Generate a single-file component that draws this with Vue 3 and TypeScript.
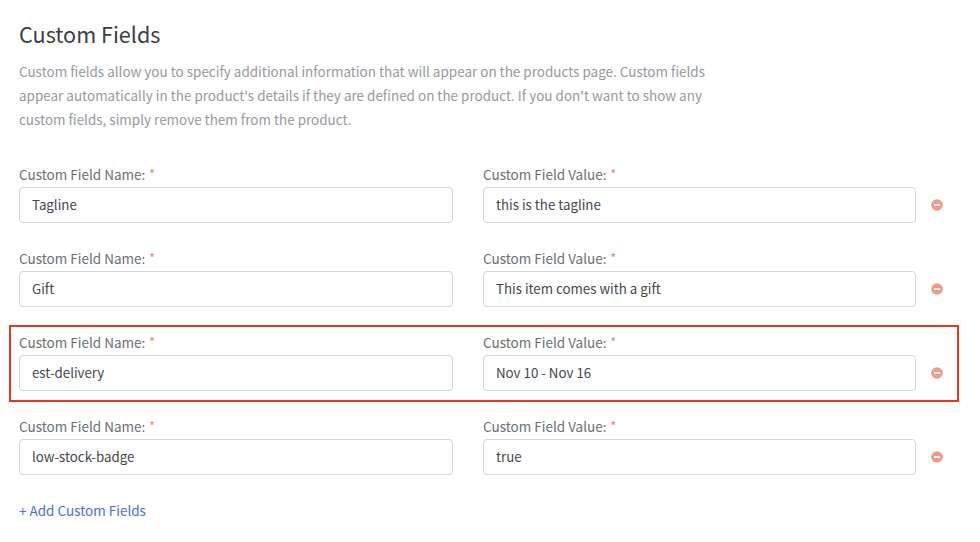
<script setup lang="ts">
interface Field { name: string; value: string; marked?: boolean }
const fields: Field[] = [
  { name: 'Tagline', value: 'this is the tagline' },
  { name: 'Gift', value: 'This item comes with a gift' },
  { name: 'est-delivery', value: 'Nov 10 - Nov 16', marked: true },
  { name: 'low-stock-badge', value: 'true' },
]
</script>

<template>
  <main class="page">
    <h1 class="title">Custom Fields</h1>
    <p class="desc">
      Custom fields allow you to specify additional information that will appear on the products page. Custom fields<br />
      appear automatically in the product's details if they are defined on the product. If you don't want to show any<br />
      custom fields, simply remove them from the product.
    </p>
    <section class="rows">
      <div v-for="f in fields" :key="f.name" class="row" :class="{ marked: f.marked }">
        <div class="field">
          <div class="label">Custom Field Name: <span class="req">*</span></div>
          <div class="input">{{ f.name }}</div>
        </div>
        <div class="field">
          <div class="label">Custom Field Value: <span class="req">*</span></div>
          <div class="input">{{ f.value }}</div>
        </div>
        <svg class="remove" width="12" height="12" viewBox="0 0 12 12" aria-hidden="true">
          <circle cx="6" cy="6" r="5.8" fill="#f2998a" />
          <rect x="3" y="5" width="6" height="2" rx="0.5" fill="#fff" />
        </svg>
      </div>
    </section>
    <a class="add">+ Add Custom Fields</a>
  </main>
</template>

<style>
html, body { margin: 0; background: #fff; }
</style>

<style scoped>
.page {
  box-sizing: border-box;
  width: 980px;
  height: 542px;
  padding: 20px 0 0 19px;
  overflow: hidden;
  font-family: "Noto Sans CJK SC", "Noto Sans", sans-serif;
}
.title {
  margin: 0;
  font-size: 21.6px;
  line-height: 28px;
  font-weight: 400;
  color: #3a3d45;
}
.desc {
  margin: 11px 0 0;
  font-size: 13.48px;
  line-height: 24px;
  color: #96999e;
  white-space: nowrap;
}
.rows {
  margin-top: 20px;
  display: flex;
  flex-direction: column;
  gap: 12px;
}
.row {
  position: relative;
  display: grid;
  grid-template-columns: 434px 433px 12px;
  column-gap: 30px;
  align-items: end;
  height: 72px;
}
.marked::after {
  content: "";
  position: absolute;
  left: -10px;
  top: 6px;
  width: 946px;
  height: 73px;
  border: 2px solid #e6391a;
  pointer-events: none;
}
.label {
  font-size: 13.5px;
  line-height: 20px;
  color: #6b6e73;
  margin-bottom: 2px;
}
.req { color: #ec7a68; font-size: 12px; position: relative; top: -1px; margin-left: 1px; }
.input {
  box-sizing: border-box;
  height: 36px;
  padding: 0 12px;
  border: 1px solid #d2d4d7;
  border-radius: 4px;
  font-size: 13.3px;
  line-height: 34px;
  color: #43464e;
}
.remove {
  align-self: end;
  margin: 0 0 12px -15px;
}
.add {
  display: block;
  margin-top: 25px;
  font-size: 13.5px;
  line-height: 20px;
  color: #4a6fd8;
}
</style>
